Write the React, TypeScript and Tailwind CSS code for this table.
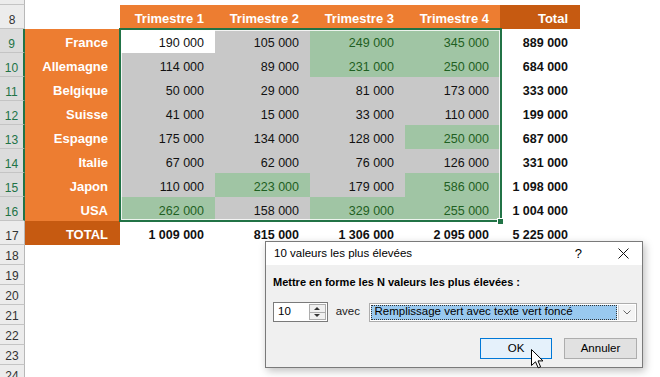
import React from "react";

type Kind = "w" | "g" | "G";

const cellCls: Record<Kind, string> = {
  w: "bg-white text-[#111]",
  g: "bg-[#C8C8C8] text-[#111]",
  G: "bg-[#A0C5A4] text-[#1F5F22]",
};

const data: { n: number; c: string; v: [string, Kind][]; t: string }[] = [
  { n: 9, c: "France", v: [["190\u00a0000", "w"], ["105\u00a0000", "g"], ["249\u00a0000", "G"], ["345\u00a0000", "G"]], t: "889\u00a0000" },
  { n: 10, c: "Allemagne", v: [["114\u00a0000", "g"], ["89\u00a0000", "g"], ["231\u00a0000", "G"], ["250\u00a0000", "G"]], t: "684\u00a0000" },
  { n: 11, c: "Belgique", v: [["50\u00a0000", "g"], ["29\u00a0000", "g"], ["81\u00a0000", "g"], ["173\u00a0000", "g"]], t: "333\u00a0000" },
  { n: 12, c: "Suisse", v: [["41\u00a0000", "g"], ["15\u00a0000", "g"], ["33\u00a0000", "g"], ["110\u00a0000", "g"]], t: "199\u00a0000" },
  { n: 13, c: "Espagne", v: [["175\u00a0000", "g"], ["134\u00a0000", "g"], ["128\u00a0000", "g"], ["250\u00a0000", "G"]], t: "687\u00a0000" },
  { n: 14, c: "Italie", v: [["67\u00a0000", "g"], ["62\u00a0000", "g"], ["76\u00a0000", "g"], ["126\u00a0000", "g"]], t: "331\u00a0000" },
  { n: 15, c: "Japon", v: [["110\u00a0000", "g"], ["223\u00a0000", "G"], ["179\u00a0000", "g"], ["586\u00a0000", "G"]], t: "1\u00a0098\u00a0000" },
  { n: 16, c: "USA", v: [["262\u00a0000", "G"], ["158\u00a0000", "g"], ["329\u00a0000", "G"], ["255\u00a0000", "G"]], t: "1\u00a0004\u00a0000" },
];

function RowHead({ n, sel }: { n: number; sel?: boolean }) {
  return (
    <div
      className={
        sel
          ? "w-[25px] shrink-0 h-full box-border border-b border-b-[#C4C4C4] border-r-2 border-r-[#217346] bg-[#DCDCDC] text-[#217346] flex items-end justify-center pb-[1px] text-[12px] leading-[14px]"
          : "w-[25px] shrink-0 h-full box-border border-b border-b-[#C4C4C4] border-r border-r-[#B8B8B8] bg-[#ECECEC] text-[#333] flex items-end justify-center pb-[1px] text-[12px] leading-[14px]"
      }
    >
      {n}
    </div>
  );
}

export default function App() {
  const tris = ["Trimestre 1", "Trimestre 2", "Trimestre 3", "Trimestre 4"];
  const totals = ["1\u00a0009\u00a0000", "815\u00a0000", "1\u00a0306\u00a0000", "2\u00a0095\u00a0000", "5\u00a0225\u00a0000"];
  return (
    <div className="relative w-[660px] h-[377px] overflow-hidden bg-white font-['Liberation_Sans',Arial,sans-serif]">
      <div className="flex flex-col -mt-[15px]">
        {/* row 7 */}
        <div className="flex h-[20px]">
          <RowHead n={7} />
        </div>
        {/* row 8 header */}
        <div className="flex h-[24px]">
          <RowHead n={8} />
          <div className="w-[95px] shrink-0" />
          {tris.map((t) => (
            <div
              key={t}
              className="w-[95px] shrink-0 bg-[#ED7D31] text-white font-bold text-[13px] leading-[14px] flex items-end justify-end pr-[11px] pb-[3px]"
            >
              {t}
            </div>
          ))}
          <div className="w-[80px] shrink-0 bg-[#C65A11] text-white font-bold text-[13px] leading-[14px] flex items-end justify-end pr-[12px] pb-[3px]">
            Total
          </div>
        </div>
        {data.map((r) => (
          <div key={r.n} className="flex h-[24px]">
            <RowHead n={r.n} sel />
            <div className="w-[95px] shrink-0 bg-[#ED7D31] text-white font-bold text-[13px] leading-[14px] flex items-end justify-end pr-[12px] pb-[3px]">
              {r.c}
            </div>
            {r.v.map(([val, k], i) => (
              <div
                key={i}
                className={`w-[95px] shrink-0 text-[12.5px] leading-[14px] flex items-end justify-end pr-[11px] pb-[3px] ${cellCls[k]}`}
              >
                {val}
              </div>
            ))}
            <div className="w-[80px] shrink-0 text-[#111] font-bold text-[12.5px] leading-[14px] flex items-end justify-end pr-[12px] pb-[3px]">
              {r.t}
            </div>
          </div>
        ))}
        {/* row 17 */}
        <div className="flex h-[24px]">
          <RowHead n={17} />
          <div className="w-[95px] shrink-0 bg-[#C65A11] text-white font-bold text-[13px] leading-[14px] flex items-end justify-end pr-[12px] pb-[3px]">
            TOTAL
          </div>
          {totals.map((t, i) => (
            <div
              key={i}
              className={
                i < 4
                  ? "w-[95px] shrink-0 text-[#111] font-bold text-[12.5px] leading-[14px] flex items-end justify-end pr-[11px] pb-[3px]"
                  : "w-[80px] shrink-0 text-[#111] font-bold text-[12.5px] leading-[14px] flex items-end justify-end pr-[12px] pb-[3px]"
              }
            >
              {t}
            </div>
          ))}
        </div>
        {[18, 19, 20, 21, 22, 23, 24].map((n) => (
          <div key={n} className="flex h-[20px]">
            <RowHead n={n} />
          </div>
        ))}
      </div>

      {/* selection border */}
      <div className="absolute left-[119px] top-[28px] w-[383px] h-[194px] border-2 border-[#217346] pointer-events-none">
        <div className="absolute inset-0 border border-white/80" />
      </div>
      <div className="absolute left-[497px] top-[218px] w-[7px] h-[7px] bg-[#217346] border border-white" />

      {/* dialog */}
      <div className="absolute left-[265px] top-[241px] w-[378px] h-[127px] border border-[#7A7A7A] shadow-[2px_3px_8px_rgba(0,0,0,0.25)] flex flex-col text-[11.5px] text-black">
        <div className="h-[23px] bg-white flex items-center pl-[8px] pr-[10px]">
          <span className="flex-1">10 valeurs les plus élevées</span>
          <span className="text-[13px] mr-[36px]">?</span>
          <svg width="11" height="11" viewBox="0 0 11 11" className="mr-[3px]">
            <path d="M0.5 0.5 L10.5 10.5 M10.5 0.5 L0.5 10.5" stroke="#111" strokeWidth="1" fill="none" />
          </svg>
        </div>
        <div className="flex-1 bg-[#F0F0F0] pl-[7px] pr-[5px] pt-[9px] flex flex-col">
          <div className="font-bold text-[11px] leading-[16px]">Mettre en forme les N valeurs les plus élevées :</div>
          <div className="flex items-center mt-[12px] h-[20px]">
            <div className="w-[55px] h-[20px] bg-white border border-[#7A7A7A] flex items-center">
              <span className="flex-1 pl-[4px]">10</span>
              <div className="w-[17px] h-[16px] mr-[1px] border border-[#ADADAD] bg-[#F0F0F0] flex flex-col">
                <div className="flex-1 flex items-center justify-center border-b border-[#ADADAD]">
                  <svg width="6" height="3" viewBox="0 0 6 3"><path d="M0 3 L3 0 L6 3 Z" fill="#333" /></svg>
                </div>
                <div className="flex-1 flex items-center justify-center">
                  <svg width="6" height="3" viewBox="0 0 6 3"><path d="M0 0 L3 3 L6 0 Z" fill="#333" /></svg>
                </div>
              </div>
            </div>
            <span className="ml-[8px] w-[33px] text-[#222]">avec</span>
            <div className="w-[270px] h-[19px] bg-white border border-[#ADADAD] flex items-stretch p-[1px]">
              <div className="flex-1 bg-[#99C9EF] border border-dotted border-[#333] flex items-center pl-[3px] leading-none">
                Remplissage vert avec texte vert foncé
              </div>
              <div className="w-[17px] ml-[1px] bg-[#F4F4F4] border-l border-[#D0D0D0] flex items-center justify-center">
                <svg width="8" height="5" viewBox="0 0 8 5"><path d="M0.5 0.5 L4 4 L7.5 0.5" stroke="#666" strokeWidth="1" fill="none" /></svg>
              </div>
            </div>
          </div>
          <div className="flex justify-end gap-[12px] mt-[16px]">
            <div className="w-[72px] h-[21px] bg-[#E5F1FB] border border-[#0078D7] flex items-center justify-center">OK</div>
            <div className="w-[73px] h-[21px] bg-[#E1E1E1] border border-[#ADADAD] flex items-center justify-center">Annuler</div>
          </div>
        </div>
      </div>

      {/* mouse cursor */}
      <svg className="absolute left-[531px] top-[349px]" width="13" height="20" viewBox="0 0 13 20">
        <path d="M0.5 0.5 L0.5 16.5 L4.5 12.8 L7.2 18.8 L9.6 17.8 L7 11.9 L12 11.9 Z" fill="white" stroke="black" strokeWidth="1" strokeLinejoin="round" />
      </svg>
    </div>
  );
}
